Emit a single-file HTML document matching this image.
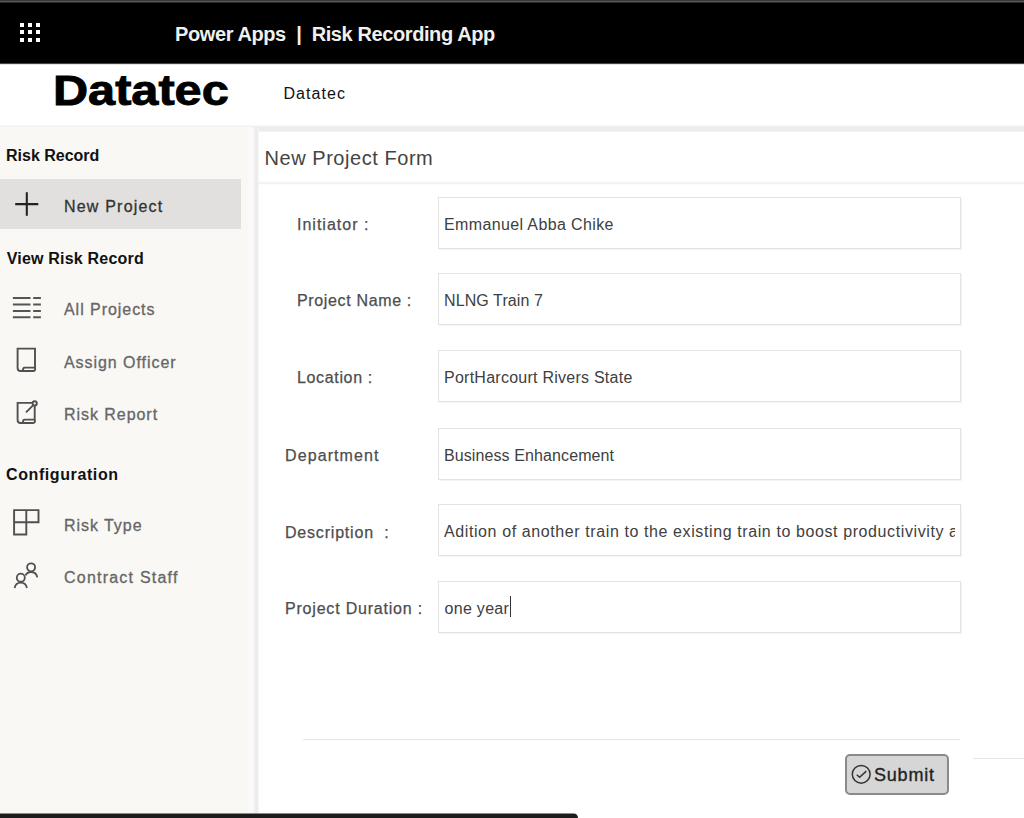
<!DOCTYPE html>
<html><head><meta charset="utf-8">
<style>
*{margin:0;padding:0;box-sizing:border-box}
html,body{width:1024px;height:818px;overflow:hidden;background:#fff;font-family:"Liberation Sans",sans-serif}
.a{position:absolute}
.t{position:absolute;line-height:1;white-space:nowrap}
#topstrip{left:0;top:0;width:1024px;height:3px;background:linear-gradient(#383838 0,#383838 1px,#5a5a5a 1px,#5a5a5a 2px,#2a2a2a 2px)}
#bar{left:0;top:3px;width:1024px;height:60px;background:#000}
#barb{left:0;top:63px;width:1024px;height:1px;background:#444}
#barb2{left:0;top:64px;width:1024px;height:1px;background:#e4e4e4}
.dot{position:absolute;width:4px;height:4px;background:#fff}
#hdr{left:175px;top:23.6px;font-size:20px;font-weight:bold;color:#f0f0f0;letter-spacing:-0.4px}
#logo{left:53px;top:69.5px;font-size:42px;font-weight:bold;color:#000;transform-origin:0 0;transform:scaleX(1.158);-webkit-text-stroke:0.9px #000}
#logo2{left:283.5px;top:86.3px;font-size:16px;color:#111;letter-spacing:1.05px}
#hline{left:0;top:125px;width:1024px;height:2px;background:linear-gradient(#f9f9f9 0,#f9f9f9 1px,#f0f0f0 1px)}
#side{left:0;top:127px;width:255px;height:691px;background:linear-gradient(90deg,#f9f8f5 0,#f9f8f5 248px,#fbfafa 248px,#fbfafa 253px,#f5f3f3 253px)}
#gap{left:255px;top:127px;width:4px;height:691px;background:linear-gradient(90deg,#edebec 0,#edebec 3px,#f7f7f7 3px)}
#gapt{left:259px;top:127px;width:765px;height:5px;background:linear-gradient(#ededed 0,#ececec 4px,#f3f3f3 4px)}
#main{left:259px;top:132px;width:765px;height:687px;background:#fff}
#sel{left:0;top:178.5px;width:240.5px;height:50.5px;background:#e1e0de}
.sh{font-size:16px;font-weight:bold;color:#111;left:6px;margin-top:0.7px}
.si{font-size:16px;color:#666;-webkit-text-stroke-width:0.3px;left:64px;letter-spacing:0.95px;margin-top:0.8px}
.lbl{font-size:16px;color:#4d4d4d;-webkit-text-stroke-width:0.25px;letter-spacing:0.65px;margin-left:-1px;margin-top:0.6px}
.val{font-size:16px;color:#404040;left:444px;letter-spacing:0.1px;margin-top:0.5px}
.box{position:absolute;left:438px;width:523px;height:52px;border:1px solid #e3e3e3;background:#fff;box-shadow:1px 1px 1px rgba(0,0,0,0.04)}
#title{left:264.5px;top:147.8px;font-size:20px;color:#444;letter-spacing:0.55px}
#tline{left:259px;top:181px;width:765px;height:4px;background:linear-gradient(#fbfbfb 0,#fbfbfb 1px,#f4f4f4 1px,#f2f2f2 3px,#fbfbfb 3px)}
#fline{left:303px;top:739px;width:657px;height:1px;background:#e6e6e6}
#fline2{left:973px;top:758px;width:51px;height:1px;background:#e6e6e6}
#btn{left:845px;top:754px;width:104px;height:41px;border:2px solid #8a8a8a;border-radius:5px;background:#d6d6d6}
#btnt{left:874px;top:766px;font-size:18px;color:#222;-webkit-text-stroke:0.35px #222;letter-spacing:0.8px}
#bot{left:0;top:813px;width:578px;height:5px;background:linear-gradient(#8a8a8a 0,#8a8a8a 1px,#1c1c1c 1px);border-top-right-radius:5px}
</style></head><body>
<div class="a" id="topstrip"></div>
<div class="a" id="bar"></div>
<div class="a" id="barb"></div>
<div class="a" id="barb2"></div>
<div class="dot" style="left:20px;top:23px"></div><div class="dot" style="left:28px;top:23px"></div><div class="dot" style="left:36px;top:23px"></div>
<div class="dot" style="left:20px;top:30px"></div><div class="dot" style="left:28px;top:30px"></div><div class="dot" style="left:36px;top:30px"></div>
<div class="dot" style="left:20px;top:38px"></div><div class="dot" style="left:28px;top:38px"></div><div class="dot" style="left:36px;top:38px"></div>
<div class="t" id="hdr">Power Apps &nbsp;|&nbsp; Risk Recording App</div>
<div class="t" id="logo">Datatec</div>
<div class="t" id="logo2">Datatec</div>

<div class="a" id="hline"></div>
<div class="a" id="side"></div>
<div class="a" id="gap"></div>
<div class="a" id="gapt"></div>
<div class="a" id="main"></div>
<div class="a" id="sel"></div>

<div class="t sh" style="top:147px">Risk Record</div>
<div class="t si" style="top:198.5px;color:#333;letter-spacing:1.2px">New Project</div>
<div class="t sh" style="top:250.2px;letter-spacing:0.2px;margin-left:0.7px">View Risk Record</div>
<div class="t si" style="top:301.2px">All Projects</div>
<div class="t si" style="top:354px">Assign Officer</div>
<div class="t si" style="top:406.2px">Risk Report</div>
<div class="t sh" style="top:466.2px;letter-spacing:0.6px">Configuration</div>
<div class="t si" style="top:517.1px">Risk Type</div>
<div class="t si" style="top:569.4px;letter-spacing:1.22px">Contract Staff</div>

<!-- icons -->
<svg class="a" style="left:0;top:180px" width="60" height="420" viewBox="0 180 60 420" fill="none" stroke="#505050" stroke-width="1.9">
  <path d="M15.2 204.1H38.3M26.8 192.2V215.7" stroke="#222" stroke-width="2.1"/>
  <path d="M12.9 298H30.5M33.2 298H40.9M12.9 304.5H30.5M33.2 304.5H40.9M12.9 311H30.5M33.2 311H40.9M12.9 317.2H30.5M33.2 317.2H40.9" stroke="#555" stroke-width="2"/>
  <path d="M17.6 368V348.6H35V367.6M17.6 368Q17.6 371 20.6 371H33Q35.8 371 35 367.6H24.8Q22.6 367.6 23 371"/>
  <path d="M17.6 420V402.9H32.2M34.7 406V419.6M17.6 420Q17.6 423 20.6 423H33Q35.8 423 34.7 419.6H24.8Q22.6 419.6 23 423M33 405.3L26 412.3"/>
  <circle cx="34.7" cy="403.4" r="2.1"/>
  <path d="M14.1 510.1H38.5V522.3H14.1ZM14.1 522.3V534.5H26.3V510.1"/>
  <circle cx="20.8" cy="577.7" r="4" stroke-width="1.8"/>
  <circle cx="31.1" cy="567.3" r="4" stroke-width="1.8"/>
  <path d="M14.6 588Q15.6 582.6 20.8 582.6Q26 582.6 26.9 588M25.6 575.4Q27 572 31.1 572Q36.3 572 37.3 577.3" stroke-width="1.8"/>
</svg>


<div class="t" id="title">New Project Form</div>
<div class="a" id="tline"></div>

<div class="t lbl" style="left:298px;top:216.5px;letter-spacing:1px">Initiator :</div>
<div class="t lbl" style="left:298px;top:292.8px">Project Name :</div>
<div class="t lbl" style="left:298px;top:369.6px">Location :</div>
<div class="t lbl" style="left:286px;top:447.5px;letter-spacing:1.1px">Department</div>
<div class="t lbl" style="left:286px;top:524.1px;letter-spacing:0.8px">Description &nbsp;:</div>
<div class="t lbl" style="left:286px;top:600.4px;letter-spacing:0.8px">Project Duration :</div>

<div class="box" style="top:197px"></div>
<div class="box" style="top:273px"></div>
<div class="box" style="top:350px"></div>
<div class="box" style="top:428px"></div>
<div class="box" style="top:504px"></div>
<div class="box" style="top:581px"></div>

<div class="t val" style="top:216.3px;letter-spacing:0.37px">Emmanuel Abba Chike</div>
<div class="t val" style="top:292.8px">NLNG Train 7</div>
<div class="t val" style="top:369.6px;letter-spacing:0.25px">PortHarcourt Rivers State</div>
<div class="t val" style="top:447.5px">Business Enhancement</div>
<div class="t val" style="top:523.7px;width:511px;overflow:hidden;letter-spacing:0.6px">Adition of another train to the existing train to boost productivivity and</div>
<div class="t val" style="top:600.8px;letter-spacing:0.3px;margin-left:0.5px">one year</div>
<div class="a" style="left:509.5px;top:596px;width:1.6px;height:21px;background:#333"></div>

<div class="a" id="fline"></div>
<div class="a" id="fline2"></div>
<div class="a" id="btn"></div>
<div class="t" id="btnt">Submit</div>
<svg class="a" style="left:840px;top:750px" width="40" height="50" viewBox="840 750 40 50" fill="none" stroke="#333" stroke-width="1.5">
  <circle cx="861.2" cy="774.3" r="8.9"/>
  <path d="M856.8 774.8L859.6 777.3L866.3 771.1"/>
</svg>
<div class="a" id="bot"></div>
</body></html>
